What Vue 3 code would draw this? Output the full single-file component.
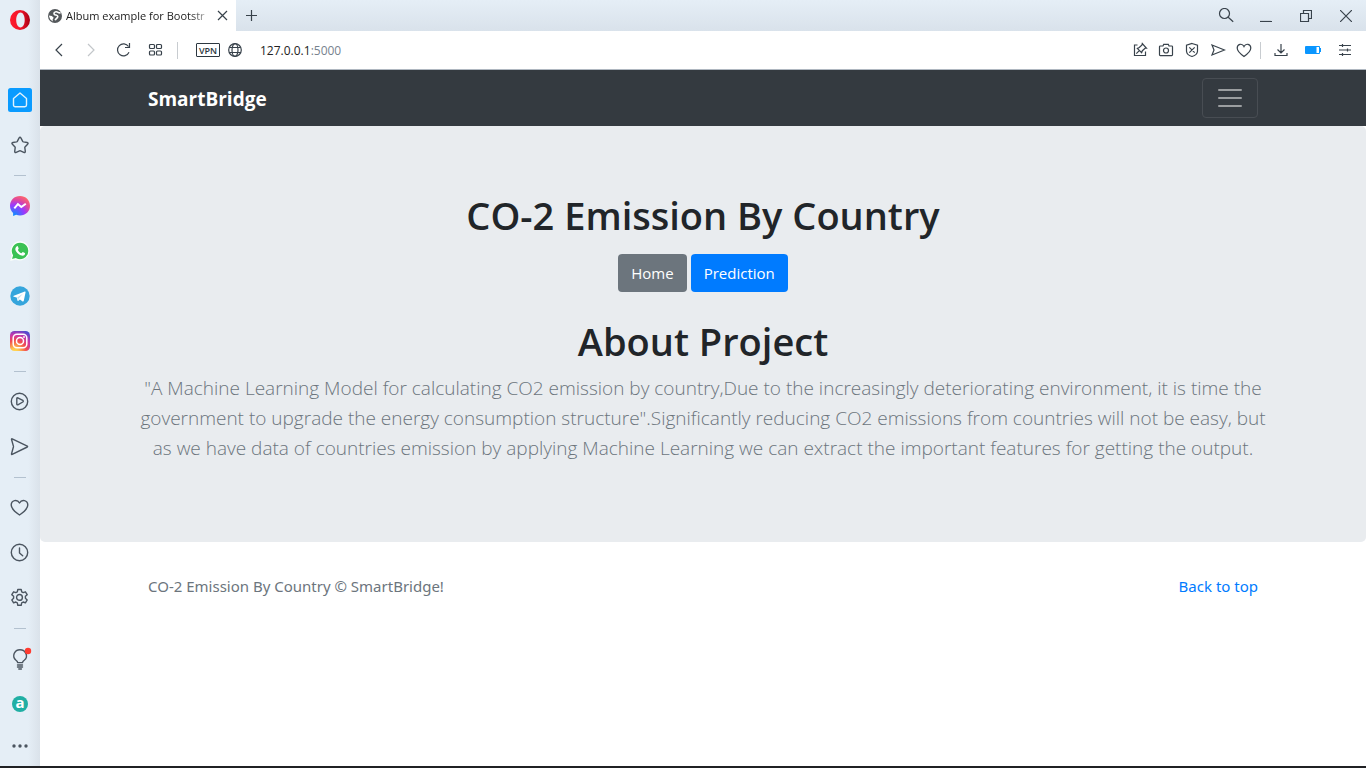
<script setup>
import { ref } from 'vue'

const address = ref('127.0.0.1')
</script>

<template>
  <div class="window">
    <div class="browser">
      <nav class="sidebar" aria-label="Browser sidebar">
        <button class="logo" aria-label="Opera menu">
          <svg width="20" height="20" viewBox="0 0 20 20">
            <defs>
              <linearGradient id="op" x1="0" x2="1"><stop offset="0" stop-color="#ff1b2d" /><stop offset=".55" stop-color="#f01428" /><stop offset="1" stop-color="#a70014" /></linearGradient>
            </defs>
            <path fill="url(#op)" fill-rule="evenodd" d="M10 0a10 10 0 1 0 0 20a10 10 0 1 0 0-20zM10.500 2.600c2.500 0 4.200 3.300 4.200 7.400s-1.700 7.400-4.200 7.400S6.200 14.100 6.200 10S8 2.600 10.500 2.600z" />
          </svg>
        </button>
        <button class="item" aria-label="Home page">
          <svg width="24" height="24" viewBox="0 0 24 24">
            <rect width="24" height="24" rx="2.500" fill="#0a9bff" />
            <path d="M5.500 10.500L12 5l6.500 5.500v6.500a1.700 1.700 0 0 1-1.700 1.700H7.200A1.700 1.700 0 0 1 5.500 17z" fill="none" stroke="#e2f2fc" stroke-width="1.400" stroke-linejoin="round" />
          </svg>
        </button>
        <button class="item" aria-label="Bookmarks">
          <svg class="line" width="20" height="20" viewBox="0 0 20 20"><path d="M9 3.100q1-1.600 2 0l1.700 3.300q.2.400.7.500l3.700.6q1.700.4.500 1.700l-2.600 2.700q-.3.400-.2.800l.5 3.600q.1 1.700-1.500 1.100l-3.300-1.500q-.5-.2-1 0l-3.300 1.500q-1.600.6-1.500-1.100l.5-3.600q.1-.4-.2-.8L2.400 9.200q-1.200-1.300.5-1.700l3.700-.6q.5-.1.700-.5z" /></svg>
        </button>
        <hr />
        <button class="item" aria-label="Messenger">
          <svg width="20" height="20" viewBox="0 0 20 20">
            <defs><radialGradient id="ms" cx=".2" cy="1" r="1.100"><stop offset="0" stop-color="#0095ff" /><stop offset=".5" stop-color="#9b38ff" /><stop offset=".75" stop-color="#df479f" /><stop offset="1" stop-color="#ff6968" /></radialGradient></defs>
            <path fill="url(#ms)" d="M10 0C4.300 0 0 4.200 0 9.800c0 3 1.200 5.500 3.100 7.200V20l3-1.300c1.200.6 2.500.8 3.900.8 5.700 0 10-4.100 10-9.700S15.700 0 10 0z" />
            <path d="M4.300 12.300l3.600-4.200 3.400 2.900 4.500-3.300" fill="none" stroke="#fff" stroke-width="2" stroke-linejoin="miter" />
          </svg>
        </button>
        <button class="item" aria-label="WhatsApp">
          <svg width="20" height="20" viewBox="0 0 20 20">
            <path d="M10.100 1a8.900 8.900 0 0 0-7.700 13.400L1.100 19l4.800-1.200A8.900 8.900 0 1 0 10.100 1z" fill="#3bc254" stroke="#fafffb" stroke-width="1.300" />
            <path d="M7 5.200c.5-.2.800 0 1 .5l.7 1.700c.1.400-.7 1.200-.8 1.500.7 1.500 1.900 2.600 3.500 3.300.4-.2 1.100-1.300 1.500-1.200l1.900.9c.8.400-.1 2.400-1.100 2.700-2.600.8-7-2.100-8.200-5.400-.5-1.600.3-3.500 1.500-4z" fill="#fff" />
          </svg>
        </button>
        <button class="item" aria-label="Telegram">
          <svg width="20" height="20" viewBox="0 0 20 20"><circle cx="10" cy="10" r="9.700" fill="#35a5dc" /><path d="M3.800 9.800l11-4.300c.5-.2.900.1.800.8l-1.800 8.500c-.2.800-.7.900-1.200.6l-2.700-2-1.500 1.400c-.5.400-.8.100-.9-.4l-.8-2.800-2.900-.9c-.7-.2-.7-.6 0-.9z" fill="#fff" /><path d="M7.200 11.500l5.700-3.700-4.300 4.600-.3 1.800" fill="#bddcec" /></svg>
        </button>
        <button class="item" aria-label="Instagram">
          <svg width="20" height="20" viewBox="0 0 20 20">
            <defs><radialGradient id="ig" cx=".25" cy="1.050" r="1.150"><stop offset="0" stop-color="#ffdd55" /><stop offset=".18" stop-color="#ffc44e" /><stop offset=".5" stop-color="#f24b50" /><stop offset=".75" stop-color="#c837ab" /><stop offset="1" stop-color="#4d4bd0" /></radialGradient></defs>
            <rect width="20" height="20" rx="4.500" fill="url(#ig)" />
            <rect x="3.200" y="3.200" width="13.600" height="13.600" rx="3.800" fill="none" stroke="#fff" stroke-width="1.500" /><circle cx="10" cy="10" r="3.500" fill="none" stroke="#fff" stroke-width="1.500" /><circle cx="14" cy="6" r=".9" fill="#fff" />
          </svg>
        </button>
        <hr />
        <button class="item" aria-label="Player">
          <svg class="line" width="20" height="20" viewBox="0 0 20 20"><circle cx="9.500" cy="9.500" r="8.200" /><path d="M6.800 6.500q0-1 1-.7l5 2.600q1 .8 0 1.600l-5 2.800q-1 .3-1-.7z" /></svg>
        </button>
        <button class="item" aria-label="My Flow">
          <svg class="line" width="20" height="20" viewBox="0 0 20 20"><path d="M1.500 2.200q0-.7.700-.4l15.100 7.400q.6.400 0 .8L2.200 17.400q-.8.300-.7-.5L3.400 10q.1-.4 0-.8z" /></svg>
        </button>
        <hr />
        <button class="item" aria-label="Favourites">
          <svg class="line" width="20" height="20" viewBox="0 0 20 20"><path d="M9.500 17Q1.200 11.500 1.200 7.100C1.200 1.900 7.300.9 9.500 5c2.200-4.100 8.300-3.100 8.300 2.100Q17.800 11.500 9.500 17z" /></svg>
        </button>
        <button class="item" aria-label="History">
          <svg class="line" width="20" height="20" viewBox="0 0 20 20"><circle cx="9.500" cy="9.500" r="8.200" /><path d="M9.500 5v5l3.200 2.800" /></svg>
        </button>
        <button class="item" aria-label="Settings">
          <svg class="line" width="20" height="20" viewBox="0 0 20 20"><path d="M7.800 1.500h3.400l.5 2.300 1.500.8 2.200-.8 1.800 2.900-1.800 1.600v2l1.800 1.600-1.800 2.900-2.200-.8-1.500.8-.5 2.500H7.800l-.5-2.500-1.500-.8-2.200.8-1.800-2.900 1.800-1.600v-2L1.800 6.700l1.800-2.900 2.200.8 1.500-.8z" /><circle cx="9.500" cy="9.400" r="2.900" /></svg>
        </button>
        <hr />
        <button class="item" aria-label="Tips">
          <svg class="line" width="24" height="24" viewBox="0 0 24 24"><path d="M9.700 15.600q-.2-1.200-1.700-2.300C3.400 9.600 6.400 2.700 12 2.700s9 6.900 4.200 10.600q-1.500 1.100-1.700 2.300zM9.500 18h5M9.500 20h5M10.800 22h2.600" /><circle cx="20" cy="4" r="3.200" fill="#ff3b30" stroke="none" /></svg>
        </button>
        <button class="item badge" aria-label="Amazon"><span>a</span></button>
        <button class="item last" aria-label="Sidebar setup">
          <svg width="20" height="6" viewBox="0 0 20 6" fill="#4b5560"><circle cx="4" cy="3" r="1.700" /><circle cx="10" cy="3" r="1.700" /><circle cx="16" cy="3" r="1.700" /></svg>
        </button>
      </nav>

      <div class="main">
        <header class="tabs">
          <div class="tab">
            <svg width="14" height="14" viewBox="0 0 14 14"><circle cx="7" cy="7" r="7" fill="#54585b" /><path d="M12.600 3.600C10.500 4.800 10 2.500 8 2.800 5.800 3.200 5.300 5 6.800 5.700c1.300.6 3 .5 3 1.900 0 1.700-2 1.500-2.600 3.700" fill="none" stroke="#fff" stroke-width="1.600" /><path d="M.8 6.600l3.100.4 1.800 1.700-1.100 1.700.2 2-2.700-2.200z" fill="#fff" /></svg>
            <span class="title">Album example for Bootstr</span>
            <button class="close" aria-label="Close tab"><svg class="dark" width="11" height="11" viewBox="0 0 11 11"><path d="M1 1l9 9M10 1l-9 9" /></svg></button>
          </div>
          <button class="new" aria-label="New tab"><svg class="dark" width="11" height="11" viewBox="0 0 11 11"><path d="M0 5.500h11M5.500 0v11" /></svg></button>
          <div class="controls">
            <button aria-label="Search tabs"><svg class="dark" width="16" height="16" viewBox="0 0 16 16"><circle cx="6.500" cy="5.500" r="5" /><path d="M10.200 9.200l5 4.600" /></svg></button>
            <button aria-label="Minimise"><svg class="dark" width="12" height="12" viewBox="0 0 12 12"><path d="M0 11.500h12" /></svg></button>
            <button aria-label="Restore"><svg class="dark" width="12" height="12" viewBox="0 0 12 12"><path d="M.5 3.500h8v8h-8zM3.500 3.500v-3h8v8h-3" /></svg></button>
            <button aria-label="Close"><svg class="dark" width="12" height="12" viewBox="0 0 12 12"><path d="M0 0l12 12M12 0L0 12" /></svg></button>
          </div>
        </header>

        <div class="toolbar">
          <div class="group">
            <button aria-label="Back"><svg class="dark" width="16" height="16" viewBox="0 0 16 16"><path d="M11 2L5 8l6 6" /></svg></button>
            <button aria-label="Forward"><svg class="dark faint" width="16" height="16" viewBox="0 0 16 16"><path d="M5 2l6 6-6 6" /></svg></button>
            <button aria-label="Reload"><svg class="dark" width="16" height="16" viewBox="0 0 16 16"><path d="M14 10.300A6 6 0 1 1 13.500 4.500M14.500 1v4.500H10" /></svg></button>
            <button aria-label="Speed dial"><svg class="dark" width="16" height="16" viewBox="0 0 16 16"><rect x="2.500" y="2.500" width="5" height="4" rx="1" /><rect x="9.500" y="2.500" width="5" height="4" rx="1" /><rect x="2.500" y="9" width="5" height="4" rx="1" /><rect x="9.500" y="9" width="5" height="4" rx="1" /></svg></button>
          </div>
          <i class="rule"></i>
          <button class="vpn">VPN</button>
          <button class="globe" aria-label="Site information"><svg class="dark" width="16" height="16" viewBox="0 0 16 16"><circle cx="8" cy="8" r="6.300" /><ellipse cx="8" cy="8" rx="3" ry="6.300" /><path d="M2.400 5.500h11.200M2.400 10.500h11.200" /></svg></button>
          <a class="address" href="#top">{{ address }}<span>:5000</span></a>
          <div class="group right">
            <button aria-label="Edit page"><svg class="dark" width="16" height="16" viewBox="0 0 16 16"><path d="M5.500 3h-3v10.500h11V9.500M4.300 11.600l3-3M5.300 6.400l4.300 4.300.8-2 2.900-2.700 1 .1-4-4.500-.3 1.400-2.700 2.500z" /></svg></button>
            <button aria-label="Snapshot"><svg class="dark" width="16" height="16" viewBox="0 0 16 16"><path d="M2.300 4H5l.7-1.700h4.600L11 4h2.700q.8 0 .8.800v8q0 .8-.8.800H2.300q-.8 0-.8-.8v-8q0-.8.800-.8z" /><circle cx="8" cy="8.500" r="2.500" /></svg></button>
            <button aria-label="Ad blocker"><svg class="dark" width="16" height="16" viewBox="0 0 16 16"><path d="M8 1.500l5.500 1.700v6Q13.200 13 8 14.500 2.800 13 2.500 9.200v-6zM5.300 5.300l5.400 5.400M10.700 5.300l-5.400 5.400" /></svg></button>
            <button aria-label="Send"><svg class="dark" width="16" height="16" viewBox="0 0 16 16"><path d="M2 3l12.500 5L2 13l2-5z" /></svg></button>
            <button aria-label="Add to favourites"><svg class="dark" width="16" height="16" viewBox="0 0 16 16"><path d="M8 14.500Q1.200 9.800 1.200 6.100C1.200 1.800 6.200.9 8 4.600c1.800-3.700 6.800-2.800 6.800 1.500Q14.800 9.800 8 14.500z" /></svg></button>
          </div>
          <i class="rule short"></i>
          <div class="group wide">
            <button aria-label="Downloads"><svg class="dark" width="16" height="16" viewBox="0 0 16 16"><path d="M8 2v9M4.500 7.500L8 11l3.500-3.500M2 11v2.500h12V11" /></svg></button>
            <button aria-label="Battery saver"><svg width="16" height="16" viewBox="0 0 16 16"><rect y="4" width="15" height="8" rx="1" fill="#0a96ff" /><path d="M11.500 5h2.500v6h-2.500z" fill="#fff" /><path d="M15 6h1v4h-1z" fill="#0a96ff" /></svg></button>
            <button aria-label="Easy setup"><svg class="dark" width="16" height="16" viewBox="0 0 16 16"><path d="M2 3.500h12M2 8h12M2 12.500h12M5.500 2v3M10.500 6.500v3M5.500 11v3" /></svg></button>
          </div>
        </div>

        <div id="top" class="page">
          <header class="navbar">
            <div class="container bar">
              <a class="brand" href="#top">SmartBridge</a>
              <button class="toggler" aria-label="Toggle navigation"><svg width="30" height="30" viewBox="0 0 30 30"><path d="M4 7h22M4 15h22M4 23h22" stroke="#9b9ea0" stroke-width="2" stroke-linecap="round" /></svg></button>
            </div>
          </header>
          <section class="jumbotron">
            <div class="container">
              <h1>CO-2 Emission By Country</h1>
              <div class="actions">
                <a class="btn" href="#top">Home</a>
                <a class="btn primary" href="#top">Prediction</a>
              </div>
              <h1>About Project</h1>
              <p class="lead">"A Machine Learning Model for calculating CO2 emission by country,Due to the increasingly deteriorating environment, it is time the<br />government to upgrade the energy consumption structure".Significantly reducing CO2 emissions from countries will not be easy, but<br />as we have data of countries emission by applying Machine Learning we can extract the important features for getting the output.</p>
            </div>
          </section>
          <footer class="container foot">
            <span>CO-2 Emission By Country © SmartBridge!</span>
            <a href="#top">Back to top</a>
          </footer>
        </div>
      </div>
    </div>
    <div class="taskbar"></div>
  </div>
</template>

<style>
body { margin: 0; }
</style>

<style scoped>
* { box-sizing: border-box; }
.window { min-height: 100vh; display: flex; flex-direction: column; background: #fff; font-family: "Open Sans", "Noto Sans", sans-serif; color: #212529; }
button { border: 0; padding: 0; margin: 0; background: none; font: inherit; color: inherit; display: flex; align-items: center; justify-content: center; }
a { text-decoration: none; }
svg { display: block; flex: none; }
.browser { flex: 1; display: flex; }
.taskbar { height: 2px; background: #202124; }
.sidebar { width: 40px; flex: none; display: flex; flex-direction: column; align-items: center; background: linear-gradient(90deg, #e5eef6 0, #e5eef6 28px, #dae2ea 100%); }
.logo { height: 40px; margin-bottom: 37px; }
.item { width: 40px; height: 45px; }
.last { height: 39px; }
.sidebar hr { width: 12px; height: 1px; margin: 8px 0 7px; border: 0; background: #b3c1cf; }
.line { fill: none; stroke: #4b5560; stroke-width: 1.4; stroke-linecap: round; stroke-linejoin: round; }
.dark { fill: none; stroke: #38424b; stroke-width: 1.2; }
.faint { stroke: #c2c6c9; }
.badge span { width: 16px; height: 16px; border-radius: 50%; background: #20afa4; color: #fff; font-weight: 700; font-size: 15px; line-height: 13px; text-align: center; }
.main { flex: 1; min-width: 0; display: flex; flex-direction: column; }
.tabs { height: 31px; display: flex; align-items: center; background: linear-gradient(#e5eef6, #d9e2eb); }
.tab { width: 196px; height: 31px; padding: 0 8px; display: flex; align-items: center; background: #fff; }
.title { flex: 1; min-width: 0; margin: 0 4px; white-space: nowrap; font-size: 11px; color: #222; mask-image: linear-gradient(90deg, #000 85%, transparent); }
.new { margin-left: 10px; }
.controls { margin-left: auto; margin-right: 14px; display: flex; gap: 28px; }
.controls button:first-child { margin-right: -2px; }
.toolbar { height: 39px; display: flex; align-items: center; border-bottom: 1px solid #afb7c0; background: #fff; }
.group { display: flex; gap: 16px; margin-left: 11px; }
.right { margin-left: auto; gap: 10px; }
.rule { width: 1px; height: 17px; margin: 0 18px 0 14px; background: #c8ccd0; }
.short { margin: 0 12px 0 8px; }
.wide { gap: 16px; margin: 0 13px 0 0; }
.vpn { width: 24px; height: 14px; border: 1px solid #2c3740; border-radius: 1px; font-size: 9px; font-weight: 600; color: #2c3740; }
.globe { margin: 0 17px 0 7px; }
.address { font-size: 12px; color: #222; }
.address span { color: #77828e; }
.page { flex: 1; font-size: 16px; line-height: 24px; }
.container { width: 100%; max-width: 1142px; margin: 0 auto; padding: 0 16px; }
.navbar { background: #343a40; padding: 8px 0; }
.bar { display: flex; justify-content: space-between; align-items: center; }
.brand { padding-top: 2px; color: #fff; font-size: 19px; font-weight: 700; }
.toggler { width: 56px; height: 40px; border: 1px solid #484d53; border-radius: 4px; }
.jumbotron { background: #e9ecef; padding: 65px 0 79px; border-radius: 5px; text-align: center; }
h1 { margin: 0; font-size: 38px; line-height: 48px; font-weight: 600; }
.actions { margin: 15px 0 25px; display: flex; justify-content: center; gap: 4px; }
.btn { padding: 7px 13px; border-radius: 4px; background: #6c757d; color: #fff; font-size: 15px; line-height: 24px; }
.primary { background: #007bff; }
.lead { margin: 8px -12px 0; font-size: 19px; line-height: 30px; font-weight: 300; color: #6c757d; }
.foot { padding-top: 32px; display: flex; justify-content: space-between; color: #6c757d; font-family: "Noto Sans", "Open Sans", sans-serif; font-size: 15px; }
.foot a { color: #007bff; }
</style>
